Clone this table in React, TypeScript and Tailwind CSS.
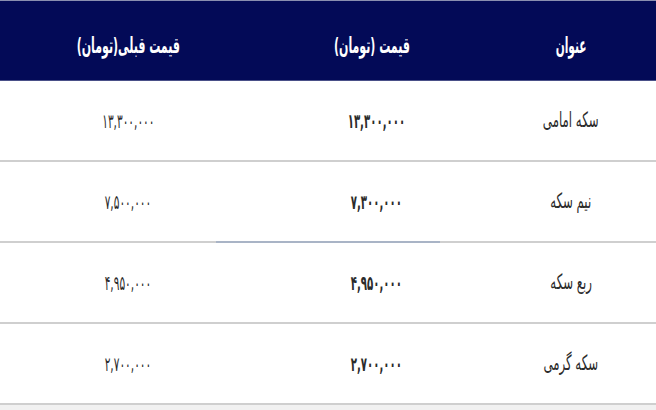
const rows = [
  { title: "سکه امامی", price: "۱۳,۳۰۰,۰۰۰", prev: "۱۳,۳۰۰,۰۰۰" },
  { title: "نیم سکه", price: "۷,۳۰۰,۰۰۰", prev: "۷,۵۰۰,۰۰۰" },
  { title: "ربع سکه", price: "۴,۹۵۰,۰۰۰", prev: "۴,۹۵۰,۰۰۰" },
  { title: "سکه گرمی", price: "۲,۷۰۰,۰۰۰", prev: "۲,۷۰۰,۰۰۰" },
]

export default function App() {
  return (
    <div className="w-[656px] h-[410px] bg-[#f1f1f1] font-['DejaVu_Sans',sans-serif] overflow-hidden">
      <div dir="rtl" className="bg-white">
        {/* Header */}
        <div className="h-px bg-[#8a8fb0]" />
        <div className="grid grid-cols-[180px_208px_268px] h-[79px] bg-[#030a57] text-white font-bold text-[22px] items-center pt-[10px]">
          <div className="text-center pl-[10px]">
            <span className="inline-block scale-x-[0.48]">عنوان</span>
          </div>
          <div className="text-center">
            <span className="inline-block scale-x-[0.5]">قیمت (تومان)</span>
          </div>
          <div className="text-center pr-[12px]">
            <span className="inline-block scale-x-[0.5]">قیمت قبلی(تومان)</span>
          </div>
        </div>
        <div className="h-px bg-[#4a5088]" />

        {rows.map((r, i) => (
          <div key={i}>
            <div className="grid grid-cols-[180px_208px_268px] h-[79px] items-center text-[#2b2b2b]">
              <div className="text-center pl-[10px] text-[21px]">
                <span className="inline-block scale-x-[0.56]">{r.title}</span>
              </div>
              <div className="text-center font-bold text-[20px] tracking-[-0.5px] pl-[8px]">
                <span className="inline-block scale-x-[0.51]">{r.price}</span>
              </div>
              <div className="text-center pr-[12px] text-[20px] tracking-[-0.5px]">
                <span className="inline-block scale-x-[0.53]">{r.prev}</span>
              </div>
            </div>
            <div dir="ltr" className="h-[2px] bg-[#cfcfcf] flex">
              {i === 1 && <div className="ml-[216px] w-[224px] bg-[#a9b4c6]" />}
            </div>
          </div>
        ))}
      </div>
    </div>
  )
}
